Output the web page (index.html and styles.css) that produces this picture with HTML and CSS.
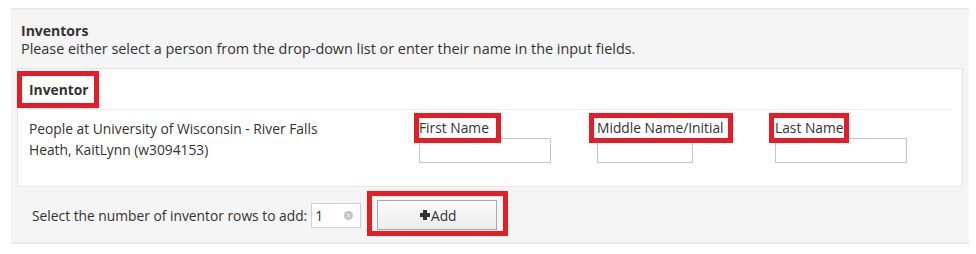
FILE: index.html
```html
<!DOCTYPE html>
<html lang="en">
	<head>
		<meta charset="UTF-8" />
		<meta name="viewport" content="width=device-width, initial-scale=1.0" />
		<title>Inventors</title>
		<link rel="stylesheet" href="styles.css">
	</head>
	<body>
		<div class="panel" id="inventors">
			<div class="intro">
				<h3>Inventors</h3>
				<p>Please either select a person from the drop-down list or enter their name in the input fields.</p>
			</div>
			<div class="card">
				<div class="card-head">
					<span class="mark mark-head">Inventor</span>
				</div>
				<div class="card-row">
					<div class="person">
						<div>People at University of Wisconsin - River Falls</div>
						<div>Heath, KaitLynn (w3094153)</div>
					</div>
					<div class="field">
						<label class="mark mark-first" for="first">First Name</label>
						<input type="text" id="first" class="name-input wide" />
					</div>
					<div class="field">
						<label class="mark mark-middle" for="middle">Middle Name/Initial</label>
						<input type="text" id="middle" class="name-input narrow" />
					</div>
					<div class="field">
						<label class="mark mark-last" for="last">Last Name</label>
						<input type="text" id="last" class="name-input wide" />
					</div>
				</div>
			</div>
			<div class="add-row">
				<label for="rows">Select the number of inventor rows to add:</label>
				<span class="count">
					<input type="text" id="rows" value="1" />
					<span class="clear"></span>
				</span>
				<span class="mark mark-btn">
					<button type="button"><span class="plus"></span>Add</button>
				</span>
			</div>
		</div>
	</body>
</html>
```

FILE: styles.css
```css
* {
	box-sizing: border-box;
}
body {
	margin: 0;
	padding: 8px 7px 0 11px;
	font-family: "Open Sans", sans-serif;
	font-size: 13.8px;
	color: #333;
	background-color: #fff;
}
.panel {
	background-color: #f5f5f5;
	border-top: 2px solid #e9e9e9;
	border-bottom: 2px solid #e9e9e9;
	padding: 12px 6px 0 6px;
}
.intro {
	padding: 0 4px;
	line-height: 18px;
}
.intro h3 {
	margin: 0;
	font-size: 14px;
	font-weight: bold;
}
.intro p {
	margin: 0;
	font-size: 14.4px;
}
.card {
	margin-top: 10px;
	background-color: #fff;
	border: 1px solid #e6e6e6;
}
.card-head {
	height: 41px;
	margin: 0 10px 0 10px;
	padding: 7px 0 0 1px;
	border-bottom: 1px solid #eee;
	line-height: 27px;
}
.card-head span {
	font-weight: bold;
}
.card-row {
	display: grid;
	grid-template-columns: 390px 178px 178px 178px;
	padding: 8px 0 23px 11px;
}
.person {
	line-height: 21px;
}
.field label {
	display: inline-block;
	line-height: 20px;
	padding-right: 4px;
}
.name-input {
	display: block;
	height: 25px;
	border: 1px solid #c6c6c6;
	border-radius: 0;
	padding: 2px 4px;
	font-family: inherit;
	font-size: 13px;
}
.wide {
	width: 132px;
}
.narrow {
	width: 96px;
}
.mark {
	outline: 5px solid #e41d27;
	outline-offset: 0;
}
.mark-head {
	display: inline-block;
	padding: 0 5px 0 7px;
	margin-left: -7px;
}
.field .mark-first {
	padding-right: 7px;
}
.field .mark-middle {
	margin-left: -3px;
	padding-left: 3px;
}
.field .mark-last {
	margin-left: -1px;
	padding-left: 1px;
	padding-right: 0;
}
.add-row {
	display: flex;
	align-items: center;
	height: 55px;
	padding: 1px 0 0 15px;
}
.count {
	position: relative;
	margin-left: 4px;
}
.count input {
	display: block;
	width: 50px;
	height: 25px;
	border: 1px solid #d0d0d0;
	padding: 2px 3px;
	font-family: inherit;
	font-size: 13.8px;
	color: #333;
}
.clear {
	position: absolute;
	right: 8px;
	top: 8px;
	width: 9px;
	height: 9px;
	border-radius: 50%;
	background-color: #c2c2c2;
}
.clear::before,
.clear::after {
	content: "";
	position: absolute;
	left: 4px;
	top: 2px;
	width: 1px;
	height: 5px;
	background-color: #f2f2f2;
	transform: rotate(45deg);
}
.clear::after {
	transform: rotate(-45deg);
}
.mark-btn {
	display: inline-block;
	margin: -3px 0 0 11px;
	padding: 4px 6px 1px 5px;
}
.mark-btn button {
	display: flex;
	align-items: center;
	justify-content: center;
	width: 120px;
	height: 30px;
	border: 1px solid #a9a9a9;
	border-radius: 0;
	background: linear-gradient(#fbfbfb, #ececec);
	font-family: inherit;
	font-size: 13.8px;
	color: #333;
	padding: 0 0 0 2px;
}
.plus {
	position: relative;
	display: inline-block;
	width: 10px;
	height: 10px;
	margin-right: 1px;
}
.plus::before,
.plus::after {
	content: "";
	position: absolute;
	background-color: #333;
}
.plus::before {
	left: 0;
	top: 3px;
	width: 10px;
	height: 4px;
}
.plus::after {
	left: 3px;
	top: 0;
	width: 4px;
	height: 10px;
}
```
